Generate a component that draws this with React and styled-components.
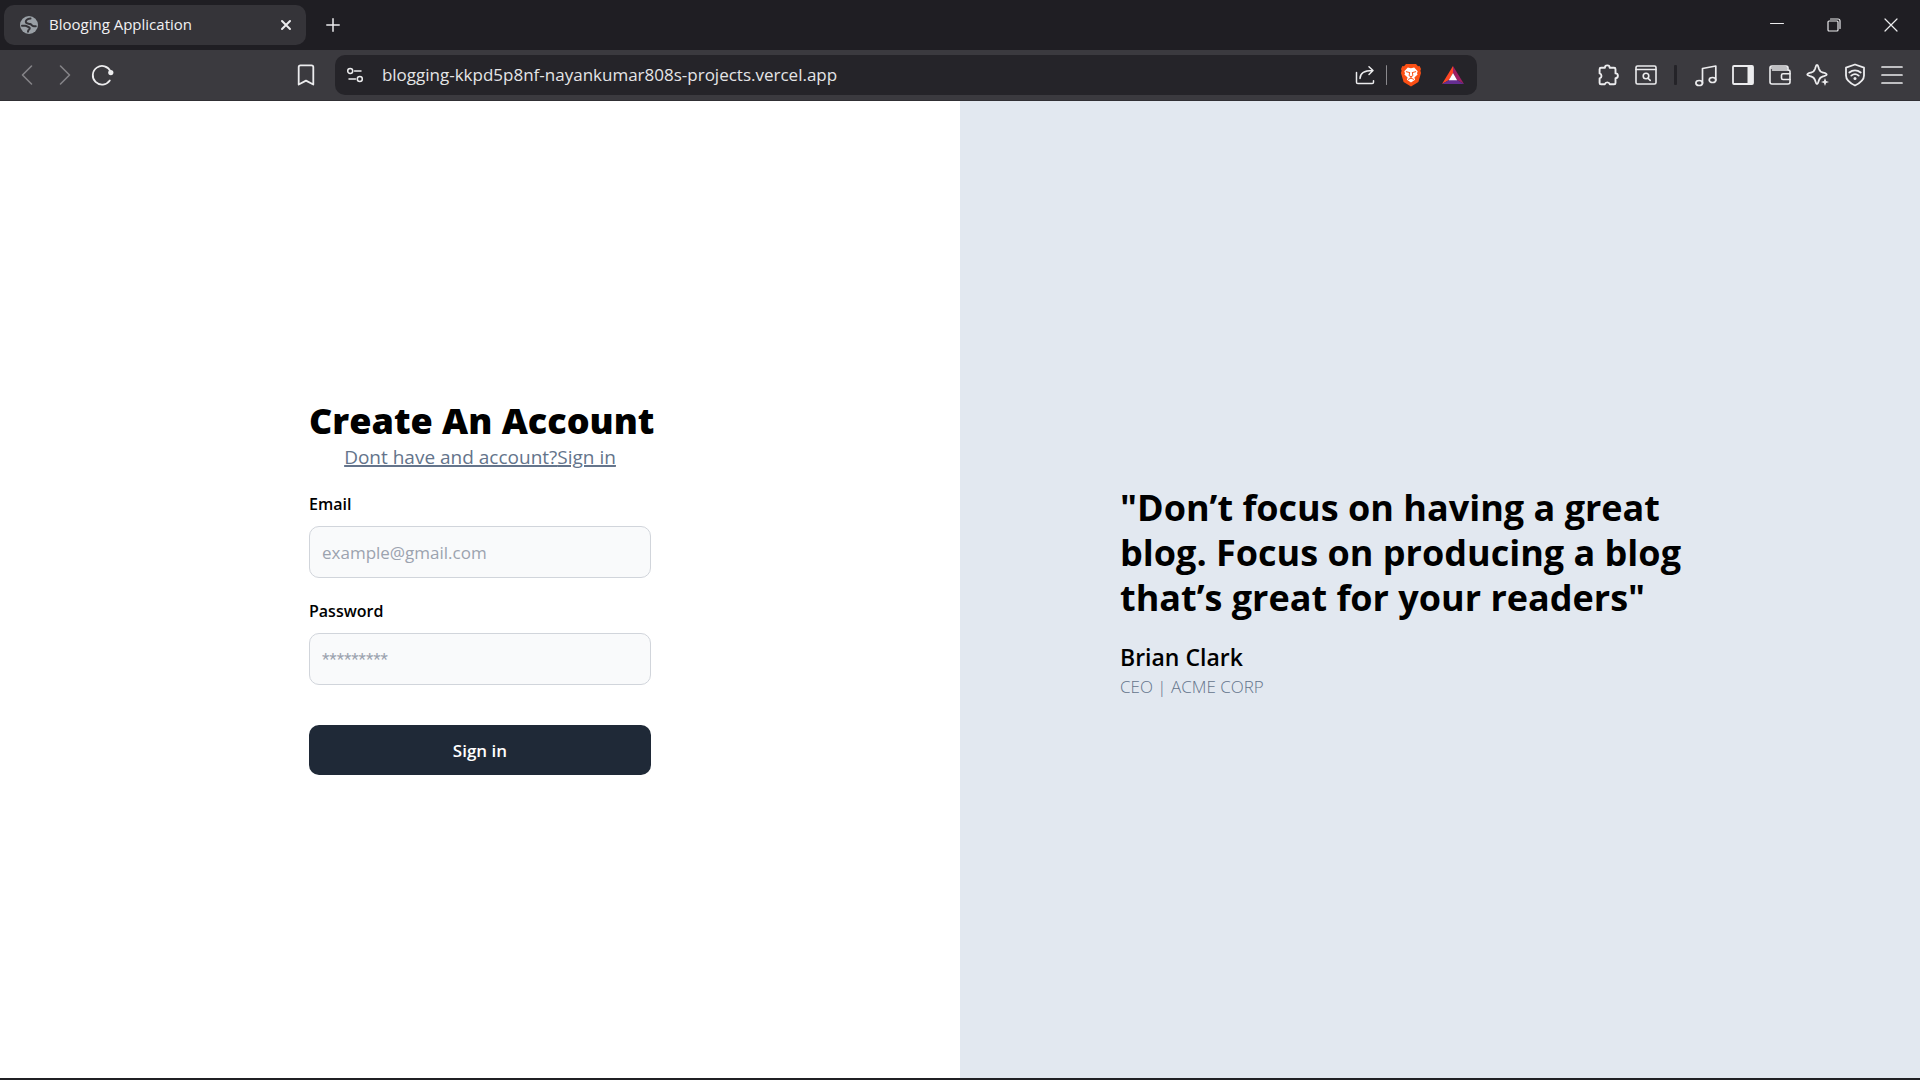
import React from "react";
import styled, { createGlobalStyle } from "styled-components";

const GlobalStyle = createGlobalStyle`
  *, *::before, *::after { box-sizing: border-box; }
  body { margin: 0; font-family: "Open Sans", "Noto Sans", sans-serif; color: #000; background: #fff; }
  button, input { font: inherit; }
  h1, p, blockquote { margin: 0; }
`;

const Window = styled.div`
  display: flex;
  flex-direction: column;
  min-height: 100vh;
  border-bottom: 2px solid #202024;
`;

/* Browser chrome */
const TabStrip = styled.header`
  display: flex;
  align-items: stretch;
  height: 50px;
  padding: 5px 1px 5px 4px;
  background: #1f1e23;
  color: #f1f1f3;
`;

const Tab = styled.div`
  display: flex;
  align-items: center;
  width: 302px;
  padding: 0 10px 0 16px;
  border-radius: 10px;
  background: #353439;
`;

const TabTitle = styled.span`
  flex: 1;
  padding: 0 0 2px 11px;
  font-size: 15px;
  line-height: 20px;
  white-space: nowrap;
`;

const IconButton = styled.button`
  display: flex;
  align-items: center;
  justify-content: center;
  width: ${(p) => p.$width || "100%"};
  height: ${(p) => p.$height || "38px"};
  padding: 0;
  border: 0;
  background: none;
  color: ${(p) => (p.$dim ? "#848387" : "#ececee")};
`;

const NewTab = styled.div`
  display: flex;
  align-items: center;
  margin-left: 12px;
`;

const WindowControls = styled.div`
  display: flex;
  align-items: center;
  margin-left: auto;
`;

const Toolbar = styled.nav`
  display: flex;
  align-items: center;
  height: 51px;
  padding: 0 9px 0 8px;
  background: #3b3a3f;
  border-bottom: 1px solid #302f34;
`;

const ToolGroup = styled.div`
  display: grid;
  flex: none;
  grid-template-columns: repeat(${(p) => p.$count}, 1fr);
  width: ${(p) => p.$width};
`;

const Spacer = styled.div`
  flex: ${(p) => p.$grow} 1 0;
`;

const AddressBar = styled.div`
  display: flex;
  align-items: center;
  flex: 0 1 1142px;
  height: 40px;
  margin-left: 10px;
  padding: 0 3px 0 5px;
  border-radius: 10px;
  background: #252429;
`;

const Address = styled.input`
  flex: 1;
  min-width: 0;
  height: 30px;
  padding: 0 12px 2px;
  border: 0;
  outline: 0;
  background: transparent;
  color: #e4e4e6;
  font-size: 17px;
`;

const Divider = styled.span`
  flex: none;
  width: ${(p) => (p.$dark ? "3px" : "1px")};
  height: 20px;
  margin: ${(p) => (p.$dark ? "0 10px" : "0 3px 0 0")};
  border-radius: 1px;
  background: ${(p) => (p.$dark ? "#242328" : "#8a898d")};
`;

/* Page */
const Page = styled.main`
  display: grid;
  flex: 1;
  grid-template-columns: 1fr 1fr;
`;

const Panel = styled.section`
  display: flex;
  flex-direction: column;
  align-items: center;
  justify-content: center;
  background: ${(p) => (p.$tinted ? "#e2e8f0" : "#fff")};
`;

const Form = styled.form`
  display: flex;
  flex-direction: column;
  width: 342px;
  padding-bottom: 6px;
`;

const Title = styled.h1`
  font-size: 36px;
  font-weight: 800;
  line-height: 45px;
  text-align: center;
  white-space: nowrap;
`;

const Switch = styled.p`
  color: #64748b;
  font-size: 19px;
  line-height: 28px;
  text-align: center;
  text-decoration: underline;
  text-decoration-thickness: 2px;
  white-space: nowrap;

  a { color: inherit; }
`;

const Field = styled.div`
  display: flex;
  flex-direction: column;
  gap: 9px;
  padding-top: 21px;
`;

const Label = styled.label`
  font-size: 16px;
  font-weight: 600;
  line-height: 25px;
`;

const TextInput = styled.input`
  width: 100%;
  height: 52px;
  padding: 0 12px;
  border: 1px solid #d1d5db;
  border-radius: 10px;
  background: #f9fafb;
  color: #111827;
  font-size: 17px;

  &::placeholder { color: #9ca3af; opacity: 1; }
  &[type="password"] { font-family: Roboto, sans-serif; }
`;

const Submit = styled.button`
  height: 50px;
  margin-top: 40px;
  border: 0;
  border-radius: 10px;
  background: #1f2937;
  color: #fff;
  font-size: 17px;
  font-weight: 600;
`;

const Testimonial = styled.figure`
  width: 100%;
  max-width: 640px;
  margin: 0;
  padding-top: 6px;
`;

const Quote = styled.blockquote`
  padding-right: 40px;
  font-size: 36px;
  font-weight: 700;
  line-height: 45px;
`;

const Author = styled.p`
  padding-top: 20px;
  font-size: 23px;
  font-weight: 600;
  line-height: 34px;
`;

const Role = styled.p`
  color: #64748b;
  font-size: 17px;
  font-weight: 300;
  line-height: 26px;
`;

function Icon({ size = 24, width = 1.6, children }) {
  return (
    <svg width={size} height={size} viewBox={`0 0 ${size} ${size}`} fill="none" stroke="currentColor"
      strokeWidth={width} strokeLinecap="round" strokeLinejoin="round" aria-hidden="true">
      {children}
    </svg>
  );
}

const Globe = () => (
  <Icon size={18} width={2}>
    <circle cx="9" cy="9" r="9" fill="#9aa0a6" stroke="none" />
    <path d="M10.500 2.500C8 2.800 5.800 4 5.800 5.800 5.800 8 8.500 7.400 10.200 8c1.800.6 1.300 2.200 3.600 2.300h2" stroke="#353439" />
    <path d="M2 9.800h3.200c1.800 0 2.300 1 3.800 1.400 1.400.5.600 2-.2 2.600-.8.500-.8 1.200-.8 2" stroke="#353439" />
  </Icon>
);

const Brave = () => (
  <Icon size={24} width={1}>
    <path d="M7 1h10l2 2.200 1.600-.1 1.400 3-.6 1.700.6 2.200-2.600 9L12 23.600 4.600 19 2 10l.6-2.200L2 6.100l1.400-3L5 3.200z" fill="#fb4f14" stroke="none" />
    <path d="M12 5.200l3.200-.6 3.500 3.700-.7 2 .6 1.200-3.200 3.100.7 2.200L12 19.600l-4.100-2.800.7-2.200-3.200-3.100.6-1.200-.7-2L8.800 4.600z" fill="#fff" stroke="none" />
    <path d="M7.300 8.700l3 .8M16.700 8.700l-3 .8M10.600 9.500l-.5 3.200 1.900 1 1.900-1-.5-3.200M12 13.700v1.500M9.500 16.300l2.500-1.200 2.500 1.200" stroke="#fb4f14" />
  </Icon>
);

const Bat = () => (
  <Icon size={24}>
    <g stroke="none">
      <path d="M12 3L1 21l7-4 4-7z" fill="#ff4724" />
      <path d="M12 3l11 18-7-4-4-7z" fill="#9e1f63" />
      <path d="M1 21h22l-7-4H8z" fill="#662d91" />
      <path d="M12 10l4.200 7.200H7.800z" fill="#fff" />
    </g>
  </Icon>
);

export default function App() {
  return (
    <Window>
      <GlobalStyle />
      <TabStrip>
        <Tab>
          <Globe />
          <TabTitle>Blooging Application</TabTitle>
          <IconButton $width="20px" $height="20px" aria-label="Close tab">
            <Icon size={12} width={2}><path d="M2 2l8 8M10 2l-8 8" /></Icon>
          </IconButton>
        </Tab>
        <NewTab>
          <IconButton $width="30px" aria-label="New tab">
            <Icon size={14} width={1.5}><path d="M7 .8v12.400M.8 7h12.400" /></Icon>
          </IconButton>
        </NewTab>
        <WindowControls>
          <IconButton $width="57px" aria-label="Minimize">
            <Icon size={14} width={1}><path d="M.5 5.500h13" /></Icon>
          </IconButton>
          <IconButton $width="57px" aria-label="Restore">
            <Icon size={14} width={1.2}><rect x="1" y="3" width="10" height="10" rx="1" /><path d="M3.500 1H11a2 2 0 0 1 2 2v7.500" /></Icon>
          </IconButton>
          <IconButton $width="57px" aria-label="Close">
            <Icon size={14} width={1.2}><path d="M1 1l12 12M13 1L1 13" /></Icon>
          </IconButton>
        </WindowControls>
      </TabStrip>

      <Toolbar aria-label="Browser toolbar">
        <ToolGroup $count={3} $width="114px">
          <IconButton $dim aria-label="Back"><Icon><path d="M16.500 3L7.500 12l9 9" /></Icon></IconButton>
          <IconButton $dim aria-label="Forward"><Icon><path d="M7.500 3l9 9-9 9" /></Icon></IconButton>
          <IconButton aria-label="Reload">
            <Icon width={1.8}>
              <path d="M18.800 17.500A9.300 9.300 0 1 1 19.600 8.500" />
              <circle cx="19.800" cy="9.600" r="2.600" fill="currentColor" stroke="none" />
            </Icon>
          </IconButton>
        </ToolGroup>
        <Spacer $grow={22} />
        <IconButton $width="37px" aria-label="Bookmark">
          <Icon width={1.800}><path d="M6.500 2.300h11a1.800 1.800 0 0 1 1.800 1.800v17.400L12 17.600l-7.300 3.900V4.100a1.800 1.800 0 0 1 1.800-1.800z" /></Icon>
        </IconButton>
        <AddressBar>
          <IconButton $width="30px" aria-label="Site information">
            <Icon size={18} width={1.500}>
              <circle cx="4.200" cy="5" r="2.500" /><path d="M8.500 5H15" />
              <circle cx="13.800" cy="13" r="2.500" /><path d="M3 13h6.500" />
            </Icon>
          </IconButton>
          <Address type="text" aria-label="Address" defaultValue="blogging-kkpd5p8nf-nayankumar808s-projects.vercel.app" />
          <IconButton $width="41px" aria-label="Share">
            <Icon size={20} width={1.500}>
              <path d="M1.500 7.500v9.700a1.300 1.300 0 0 0 1.300 1.300h14.400a1.300 1.300 0 0 0 1.300-1.300v-1.500" />
              <path d="M5 13.500c0-5 4-8 12.500-8M14 1.700l4 3.800-4 4" />
            </Icon>
          </IconButton>
          <Divider />
          <IconButton $width="42px" aria-label="Brave Shields"><Brave /></IconButton>
          <IconButton $width="42px" aria-label="Brave Rewards"><Bat /></IconButton>
        </AddressBar>
        <Spacer $grow={15} />
        <ToolGroup $count={2} $width="74px">
          <IconButton aria-label="Extensions">
            <Icon width={1.900}>
              <path d="M4 4.800h3.900a2.400 2.400 0 0 1 4.800 0h4.400a1.400 1.400 0 0 1 1.400 1.400v4.200a2.400 2.400 0 0 1 0 4.800v4.700a1.400 1.400 0 0 1-1.400 1.400h-4.300a2.600 2.600 0 0 0-5 0H4a1.400 1.400 0 0 1-1.400-1.400v-4.500a2.600 2.600 0 0 0 0-5V6.200A1.400 1.400 0 0 1 4 4.800z" />
            </Icon>
          </IconButton>
          <IconButton aria-label="Search tabs">
            <Icon><rect x="2" y="3" width="20" height="18" rx="1.500" /><path d="M2 6.500h20" /><circle cx="12" cy="13" r="2.800" /><path d="M14 15.200l2.200 2.200" /></Icon>
          </IconButton>
        </ToolGroup>
        <Divider $dark />
        <ToolGroup $count={6} $width="224px">
          <IconButton aria-label="Media">
            <Icon width={1.700}><ellipse cx="5.200" cy="20" rx="3.300" ry="2.500" /><ellipse cx="18.500" cy="17" rx="3.300" ry="2.500" /><path d="M8.500 20V5.500L21.800 3v14" /></Icon>
          </IconButton>
          <IconButton aria-label="Sidebar">
            <Icon width={1.800}><rect x="2" y="3" width="20" height="18" rx="1" /><path d="M16.500 3H21a1 1 0 0 1 1 1v16a1 1 0 0 1-1 1h-4.500z" fill="currentColor" stroke="none" /></Icon>
          </IconButton>
          <IconButton aria-label="Wallet">
            <Icon>
              <path d="M20 7.200V5a2 2 0 0 0-2-2H4a2 2 0 0 0-2 2v14a2 2 0 0 0 2 2h16a2 2 0 0 0 2-2V8.500a1.500 1.500 0 0 0-1.500-1.500H4.500" />
              <path d="M3 5h16M22 10.800h-7a1.500 1.500 0 0 0-1.500 1.500v2.700a1.500 1.500 0 0 0 1.500 1.500h7" />
            </Icon>
          </IconButton>
          <IconButton aria-label="Assistant">
            <Icon width={1.800}>
              <path d="M11 2c1.100 0 1.300 1.600 1.900 3.700.7 2.200 1.900 3.300 4.100 3.900 2.300.6 3.700.9 3.700 1.900s-1.400 1.300-3.700 1.900c-2.200.6-3.400 1.700-4.100 3.900-.6 2.100-.8 3.700-1.900 3.700s-1.300-1.600-1.900-3.700c-.7-2.200-1.900-3.300-4.100-3.900-2.300-.6-3.700-.9-3.700-1.900s1.400-1.300 3.700-1.900c2.200-.6 3.400-1.700 4.100-3.900C9.700 3.600 9.900 2 11 2z" />
              <path d="M19 15l1.100 2.900L23 19l-2.900 1.100L19 23l-1.100-2.900L15 19l2.900-1.100z" fill="currentColor" stroke="none" />
            </Icon>
          </IconButton>
          <IconButton aria-label="VPN">
            <Icon width={1.800}>
              <path d="M12 1.500l9 3.200v7.800c0 4.300-3.800 7.500-9 10-5.200-2.500-9-5.700-9-10V4.700z" />
              <path d="M6.300 9.500c3.400-2.700 8-2.700 11.400 0M8.300 12.600c2.200-1.800 5.200-1.800 7.400 0" />
              <circle cx="12" cy="15.500" r="1.500" fill="currentColor" stroke="none" />
            </Icon>
          </IconButton>
          <IconButton aria-label="Menu">
            <Icon width={1.700}><path d="M2 4h20M2 12h20M2 20h20" /></Icon>
          </IconButton>
        </ToolGroup>
      </Toolbar>

      <Page>
        <Panel>
          <Form onSubmit={(e) => e.preventDefault()}>
            <Title>Create An Account</Title>
            <Switch>Dont have and account?<a href="#signin">Sign in</a></Switch>
            <Field>
              <Label htmlFor="email">Email</Label>
              <TextInput id="email" type="email" placeholder="example@gmail.com" />
            </Field>
            <Field>
              <Label htmlFor="password">Password</Label>
              <TextInput id="password" type="password" placeholder="*********" />
            </Field>
            <Submit type="submit">Sign in</Submit>
          </Form>
        </Panel>
        <Panel $tinted>
          <Testimonial>
            <Quote>"Don’t focus on having a great blog. Focus on producing a blog that’s great for your readers"</Quote>
            <figcaption>
              <Author>Brian Clark</Author>
              <Role>CEO | ACME CORP</Role>
            </figcaption>
          </Testimonial>
        </Panel>
      </Page>
    </Window>
  );
}
